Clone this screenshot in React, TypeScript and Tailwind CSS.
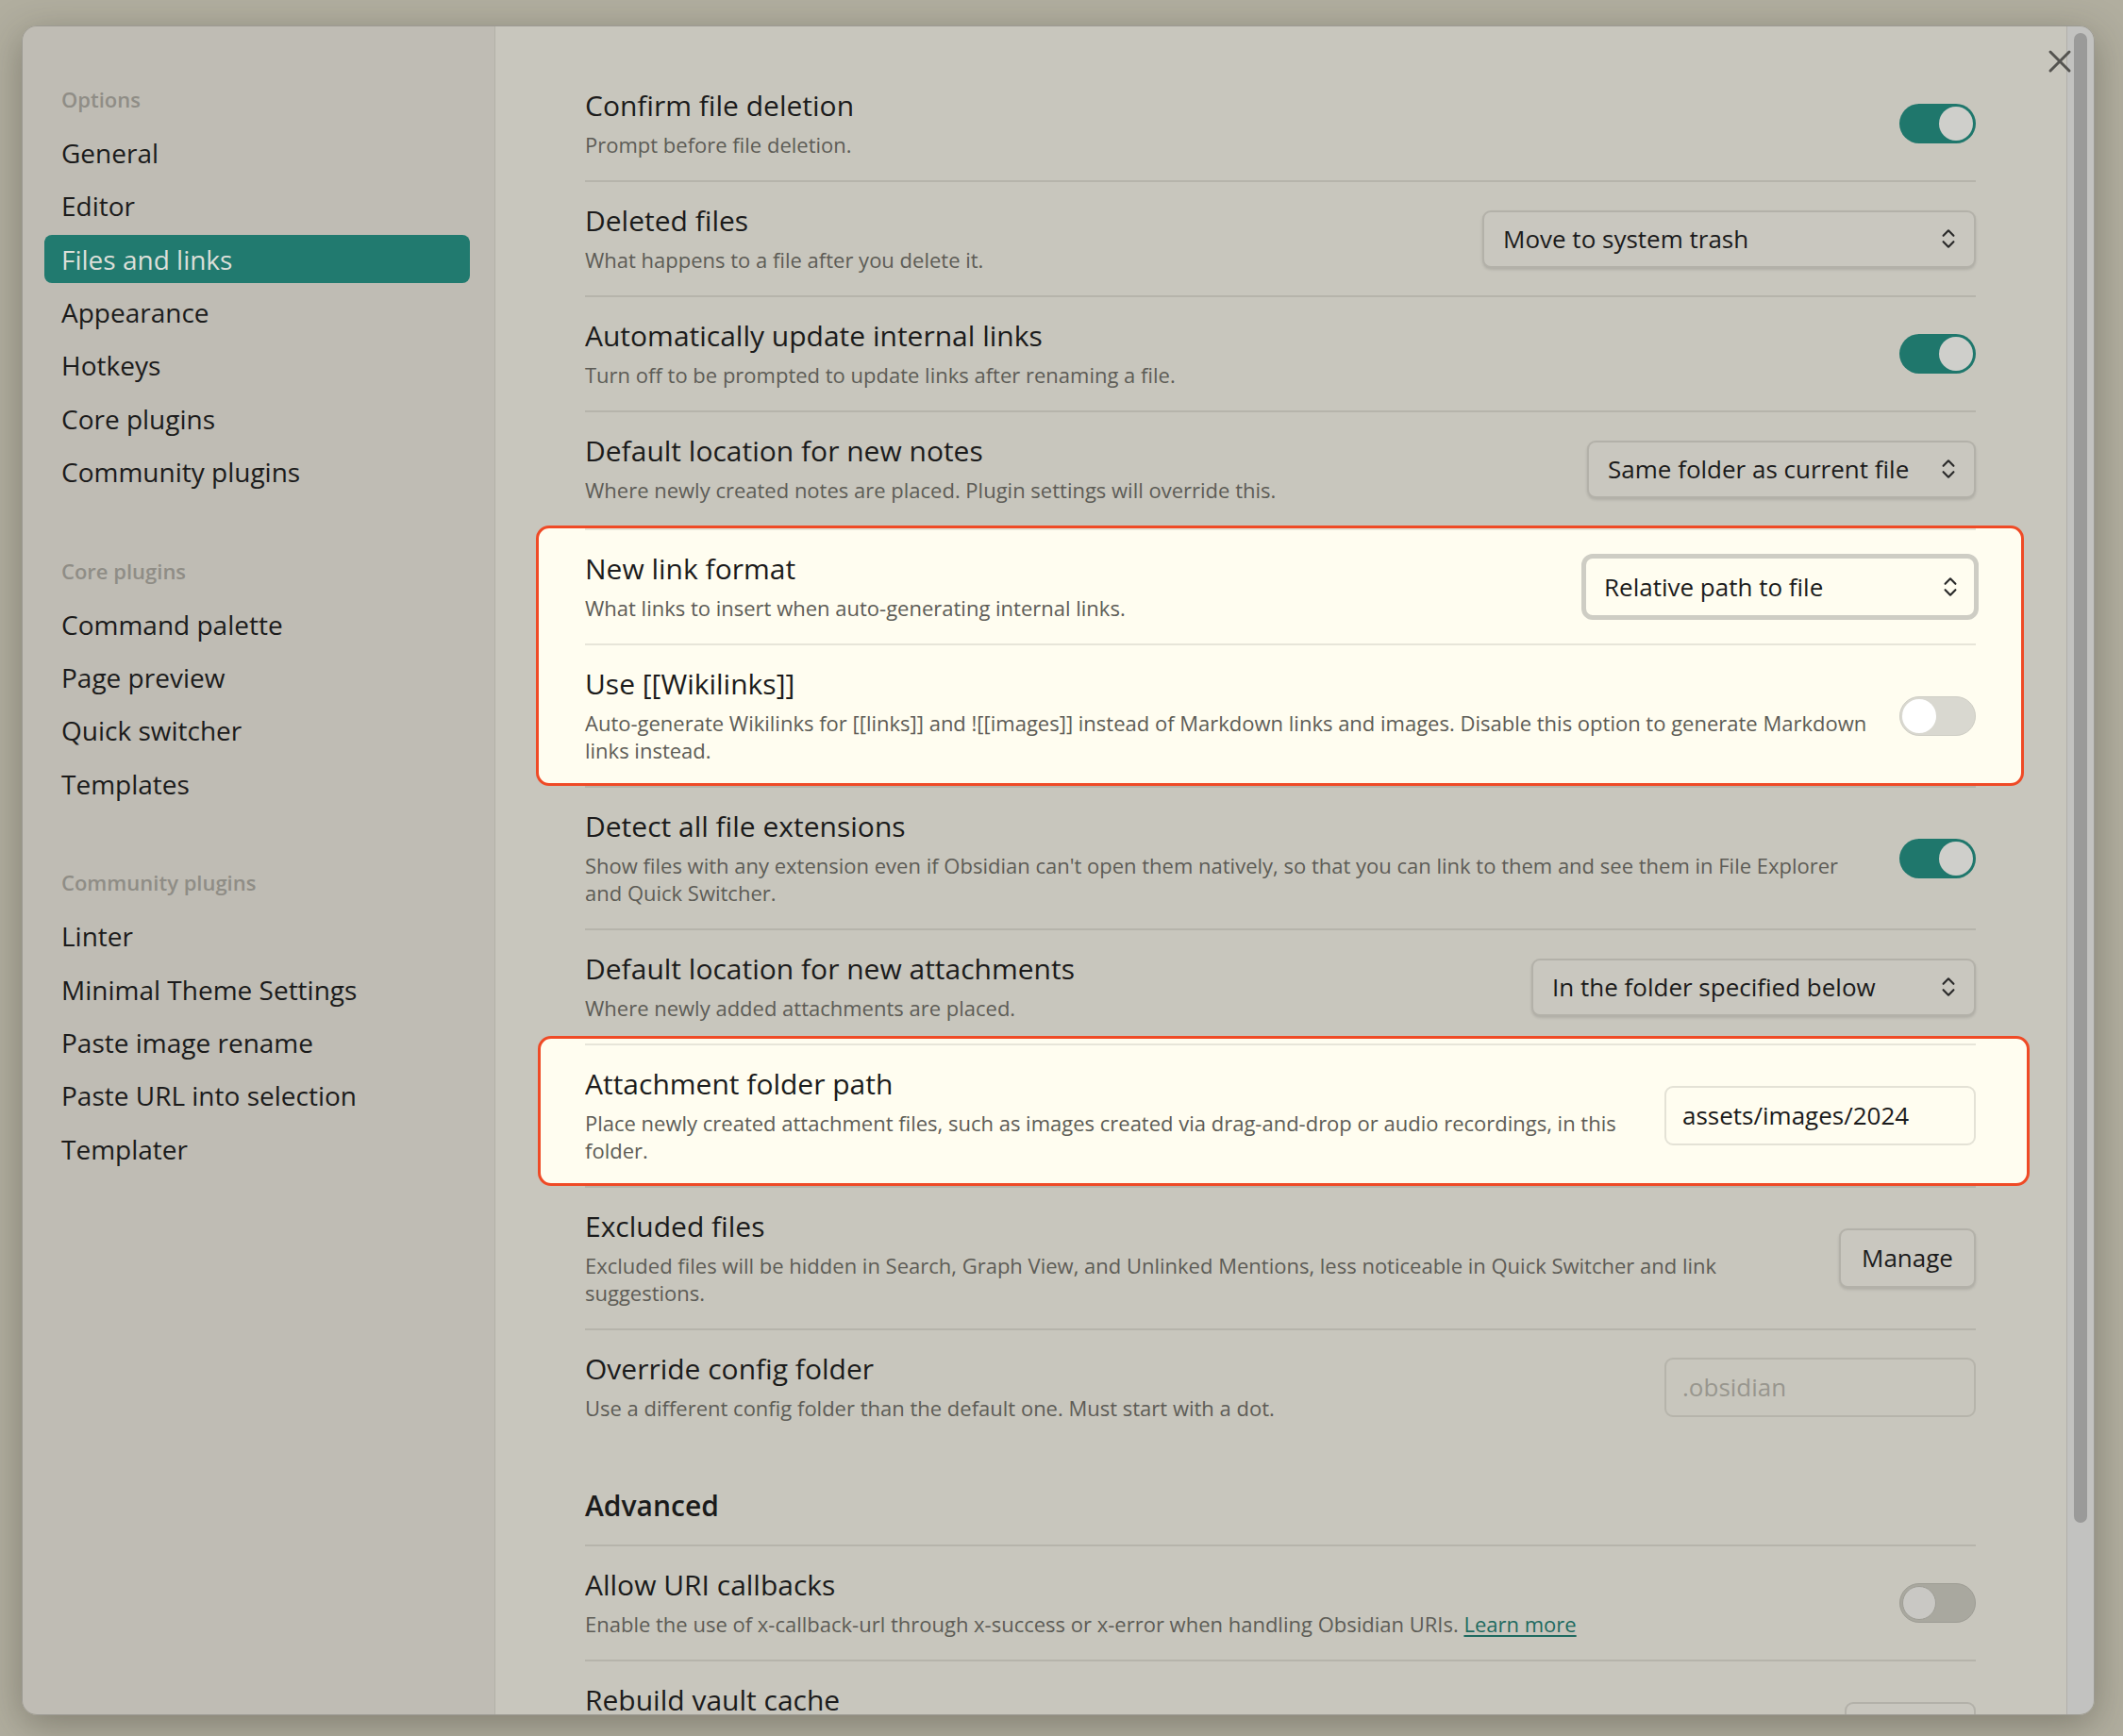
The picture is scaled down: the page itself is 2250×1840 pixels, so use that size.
import React from 'react';
import { ChevronsUpDown, X } from 'lucide-react';

// Settings modal — "Files and links" tab, two rows called out with red frames

type Group = { title: string; items: string[] };

const groups: Group[] = [
  {
    title: 'Options',
    items: ['General', 'Editor', 'Files and links', 'Appearance', 'Hotkeys', 'Core plugins', 'Community plugins'],
  },
  { title: 'Core plugins', items: ['Command palette', 'Page preview', 'Quick switcher', 'Templates'] },
  {
    title: 'Community plugins',
    items: ['Linter', 'Minimal Theme Settings', 'Paste image rename', 'Paste URL into selection', 'Templater'],
  },
];

function Toggle({ on, light }: { on?: boolean; light?: boolean }) {
  if (on) {
    return (
      <div className="w-[81px] h-[42px] shrink-0 rounded-full bg-[#1f776c] flex items-center justify-end p-[3px]">
        <div className="w-[36px] h-[36px] rounded-full bg-[#cfcfcb]" />
      </div>
    );
  }
  if (light) {
    return (
      <div className="w-[81px] h-[42px] shrink-0 rounded-full bg-[#d9d8d0] border border-[#cfcec5] flex items-center p-[2px]">
        <div className="w-[36px] h-[36px] rounded-full bg-white" />
      </div>
    );
  }
  return (
    <div className="w-[81px] h-[42px] shrink-0 rounded-full bg-[#a9a89f] border border-[#9e9d95] flex items-center p-[2px]">
      <div className="w-[36px] h-[36px] rounded-full bg-[#c9c8c4] border border-[#9e9d95]" />
    </div>
  );
}

function Select({ value, width, focus }: { value: string; width: string; focus?: boolean }) {
  return (
    <div
      className={`relative shrink-0 flex items-center text-[26px] text-[#1b1b1b] ${width} ${
        focus
          ? 'h-[70px] rounded-[12px] border-[5px] border-[#cecdc4] bg-[#fffdf0] pl-[19px]'
          : 'h-[61px] rounded-[9px] border-2 border-[#b3b1a9] bg-[#c9c7bf] pl-[20px] shadow-[0_2px_3px_rgba(0,0,0,0.12)]'
      }`}
    >
      {value}
      <ChevronsUpDown
        size={26}
        strokeWidth={2}
        className={`absolute text-[#2a2a2a] ${focus ? 'right-[12px]' : 'right-[14px]'}`}
      />
    </div>
  );
}

function Row({
  name,
  desc,
  children,
  first,
  inBox,
  pb = 'pb-[23px]',
}: {
  name: string;
  desc: React.ReactNode;
  children?: React.ReactNode;
  first?: boolean;
  inBox?: boolean;
  pb?: string;
}) {
  return (
    <div
      className={`flex items-center pt-[23px] ${pb} ${
        first ? '' : inBox ? 'border-t-2 border-[#e7e5d9]' : 'border-t-2 border-[#b6b4ab]'
      }`}
    >
      <div className="flex-1 min-w-0 pr-[34px]">
        <div className="text-[30px] leading-[36px] text-[#1b1b1b]">{name}</div>
        <div className="mt-[9px] text-[22px] leading-[29px] text-[#5d5c56]">{desc}</div>
      </div>
      {children}
    </div>
  );
}

export default function App() {
  return (
    <div className="w-[2250px] h-[1840px] bg-[#b1ae9f] pl-[23px] pt-[27px] font-['Open_Sans',sans-serif] overflow-hidden">
      <div className="relative w-[2197px] h-[1791px] rounded-[16px] border border-[#9c9a93] overflow-hidden flex shadow-[0_10px_40px_rgba(40,38,25,0.35)]">
        {/* sidebar */}
        <div className="w-[501px] shrink-0 bg-[#bfbcb4] border-r border-[#b3b1a8] pt-[52px] pl-[23px] pr-[26px]">
          {groups.map((g, gi) => (
            <div key={g.title} className={`flex flex-col gap-[5.4px] ${gi > 0 ? 'mt-[54px]' : ''}`}>
              <div className="h-[51px] px-[18px] flex items-center text-[22px] font-semibold text-[#8f8d86]">
                {g.title}
              </div>
              {g.items.map(it => (
                <div
                  key={it}
                  className={`h-[51px] px-[18px] rounded-[8px] flex items-center text-[28px] ${
                    it === 'Files and links' && gi === 0 ? 'bg-[#217a6f] text-[#dcdfd9]' : 'text-[#1b1b1b]'
                  }`}
                >
                  {it}
                </div>
              ))}
            </div>
          ))}
        </div>

        {/* main */}
        <div className="flex-1 min-w-0 bg-[#c8c6bd] pt-[43px] pl-[95px] pr-[96px] overflow-hidden">
          <Row name="Confirm file deletion" desc="Prompt before file deletion." first>
            <Toggle on />
          </Row>
          <Row name="Deleted files" desc="What happens to a file after you delete it.">
            <Select value="Move to system trash" width="w-[523px]" />
          </Row>
          <Row name="Automatically update internal links" desc="Turn off to be prompted to update links after renaming a file.">
            <Toggle on />
          </Row>
          <Row name="Default location for new notes" desc="Where newly created notes are placed. Plugin settings will override this.">
            <Select value="Same folder as current file" width="w-[412px]" />
          </Row>

          <div className="-ml-[52px] -mr-[51px] pl-[49px] pr-[48px] border-[3px] border-[#ef4a26] rounded-[14px] bg-[#fffdf0]">
            <Row name="New link format" desc="What links to insert when auto-generating internal links." inBox>
              <div className="-mr-[3px]">
                <Select value="Relative path to file" width="w-[421px]" focus />
              </div>
            </Row>
            <Row
              name="Use [[Wikilinks]]"
              desc="Auto-generate Wikilinks for [[links]] and ![[images]] instead of Markdown links and images. Disable this option to generate Markdown links instead."
              inBox
              pb="pb-[20px]"
            >
              <Toggle light />
            </Row>
          </div>

          <Row
            name="Detect all file extensions"
            desc="Show files with any extension even if Obsidian can't open them natively, so that you can link to them and see them in File Explorer and Quick Switcher."
          >
            <Toggle on />
          </Row>
          <Row name="Default location for new attachments" desc="Where newly added attachments are placed.">
            <Select value="In the folder specified below" width="w-[471px]" />
          </Row>

          <div className="-mt-[8px] -ml-[50px] -mr-[57px] pl-[47px] pr-[54px] pt-[5px] border-[3px] border-[#ef4a26] rounded-[14px] bg-[#fffdf0] relative">
            <Row
              name="Attachment folder path"
              desc="Place newly created attachment files, such as images created via drag-and-drop or audio recordings, in this folder."
              inBox
              pb="pb-[20px]"
            >
              <div className="w-[330px] h-[63px] shrink-0 rounded-[9px] border-2 border-[#e4e2d6] bg-[#fffdf0] pl-[17px] flex items-center text-[26px] text-[#1b1b1b]">
                assets/images/2024
              </div>
            </Row>
          </div>

          <Row
            name="Excluded files"
            desc="Excluded files will be hidden in Search, Graph View, and Unlinked Mentions, less noticeable in Quick Switcher and link suggestions."
          >
            <div className="w-[145px] h-[63px] shrink-0 rounded-[9px] border-2 border-[#b3b1a9] bg-[#c9c7bf] flex items-center justify-center text-[26px] text-[#1b1b1b] shadow-[0_2px_3px_rgba(0,0,0,0.12)]">
              Manage
            </div>
          </Row>
          <Row name="Override config folder" desc="Use a different config folder than the default one. Must start with a dot.">
            <div className="w-[330px] h-[63px] shrink-0 rounded-[9px] border-2 border-[#b6b4ab] pl-[17px] flex items-center text-[26px] text-[#98968e]">
              .obsidian
            </div>
          </Row>

          <div className="pt-[48px] pb-[23px] text-[30px] leading-[36px] font-semibold text-[#1b1b1b]">Advanced</div>

          <Row
            name="Allow URI callbacks"
            desc={
              <>
                Enable the use of x-callback-url through x-success or x-error when handling Obsidian URIs.{' '}
                <span className="text-[#1e6a60] underline underline-offset-[3px]">Learn more</span>
              </>
            }
          >
            <Toggle />
          </Row>
          <Row
            name="Rebuild vault cache"
            desc="Rebuild the cache of files, links and metadata for this vault from scratch. Use this if you notice files or links that are missing or out of date after syncing."
          >
            <div className="w-[139px] h-[63px] shrink-0 rounded-[9px] border-2 border-[#b3b1a9] bg-[#c9c7bf] flex items-center justify-center text-[26px] text-[#1b1b1b]">
              Rebuild
            </div>
          </Row>
        </div>

        {/* scrollbar */}
        <div className="w-[29px] shrink-0 bg-[#c2c2c0] border-l border-[#b1b0ab] pt-[7px] flex justify-center">
          <div className="w-[14px] h-[1579px] rounded-full bg-[#9a9a99]" />
        </div>

        <X size={40} strokeWidth={1.8} className="absolute right-[16px] top-[17px] text-[#555450]" />
      </div>
    </div>
  );
}
